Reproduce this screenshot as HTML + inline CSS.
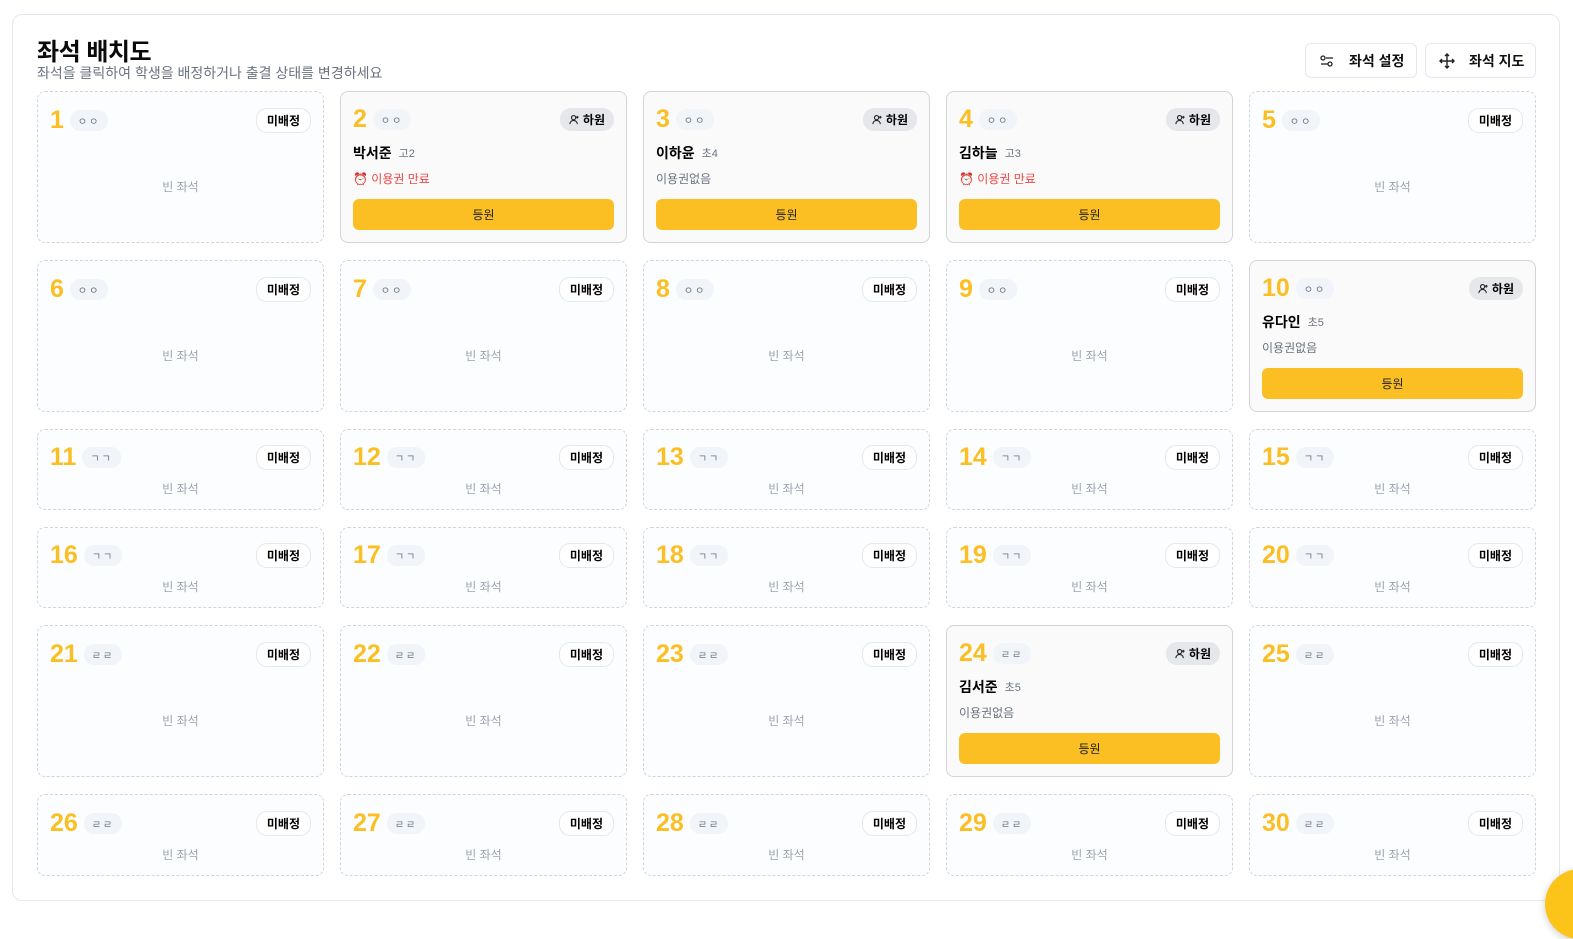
<!DOCTYPE html>
<html><head><meta charset="utf-8"><style>
*{box-sizing:border-box;margin:0;padding:0}
body{width:1573px;height:914px;background:#fff;font-family:"Liberation Sans","Noto Sans CJK KR",sans-serif;position:relative;overflow:hidden}
.outer{position:absolute;left:12px;top:14px;width:1548px;height:887px;border:1px solid #e2e8f0;border-radius:10px;background:#fff}
h1{position:absolute;left:24px;top:17px;font-size:24px;font-weight:700;color:#0a0a0a;letter-spacing:-0.5px}
.sub{position:absolute;left:24px;top:48px;font-size:14px;color:#6b7280}
.btn{position:absolute;top:28px;height:35px;border:1px solid #e2e8f0;border-radius:6px;display:flex;align-items:center;font-size:14px;font-weight:700;color:#111;background:#fff}
.grid{position:absolute;left:24px;top:76px;display:grid;grid-template-columns:repeat(5,287px);column-gap:16px;row-gap:17px;grid-template-rows:152px 152px 81px 81px 152px 82px}
.c{border:1px dashed #d1d5db;border-radius:8px;background:#fcfdfe;padding:12px 12px;display:flex;flex-direction:column}
.c.o{border:1px solid #d4d4d8;background:#fafafa}
.h{height:32px;display:flex;align-items:center}
.n{font-size:25px;font-weight:700;color:#fbbf24;line-height:1}
.z{margin-left:6px;background:#f1f5f9;border-radius:10px;font-size:10px;color:#6b7280;padding:3px 8px;letter-spacing:2px}
.p{margin-left:auto;border:1px solid #e2e8f0;border-radius:11px;font-size:12px;font-weight:700;padding:3px 10px;background:#fff}
.r{margin-left:auto;background:#e5e7eb;border-radius:11px;font-size:12px;font-weight:700;padding:3px 9px;display:flex;align-items:center;gap:3px}
.e{flex:1;display:flex;align-items:center;justify-content:center;font-size:12px;color:#9ca3af;padding-top:6px}
.c.s .e{flex:none;margin-top:6px;height:18px;padding:0}
.nm{margin-top:8px;height:20px;font-size:14px;font-weight:700;display:flex;align-items:center}
.nm span{font-size:11px;color:#6b7280;font-weight:400;margin-left:7px}
.tk{margin-top:7px;height:16px;font-size:12px;display:flex;align-items:center;color:#6b7280}
.tk.x{color:#ef4444}
.go{margin-top:13px;height:32px;background:#fbbf24;border-radius:6px;display:flex;align-items:center;justify-content:center;font-size:12px;color:#222}
.chat{position:absolute;left:1545px;top:869px;width:70px;height:70px;border-radius:50%;background:#fcc419;box-shadow:0 2px 8px rgba(0,0,0,.2)}
</style></head><body>
<div class="outer">
<h1>좌석 배치도</h1>
<div class="sub">좌석을 클릭하여 학생을 배정하거나 출결 상태를 변경하세요</div>
<div class="btn" style="left:1292px;width:112px;padding-left:14px"><svg width="14" height="14" viewBox="0 0 14 14" fill="none" stroke="#222" stroke-width="1.3"><circle cx="3" cy="4" r="2"/><line x1="6" y1="4" x2="13" y2="4"/><circle cx="10" cy="10" r="2"/><line x1="1" y1="10" x2="8" y2="10"/></svg><span style="margin-left:15px">좌석 설정</span></div>
<div class="btn" style="left:1412px;width:111px;padding-left:13px"><svg width="16" height="16" viewBox="0 0 16 16" fill="none" stroke="#222" stroke-width="1.4"><path d="M8 1v14M1 8h14M6 3l2-2 2 2M6 13l2 2 2-2M3 6l-2 2 2 2M13 6l2 2-2 2"/></svg><span style="margin-left:14px">좌석 지도</span></div>
<div class="grid" id="g"></div>
</div>
<div class="chat"></div>
<script>
var occ={2:['박서준','고2',1],3:['이하윤','초4',0],4:['김하늘','고3',1],10:['유다인','초5',0],24:['김서준','초5',0]};
var tall=[1,2,5],h='';
for(var i=1;i<=30;i++){var row=Math.ceil(i/5);var z=row<=2?'ㅇㅇ':row<=4?'ㄱㄱ':'ㄹㄹ';var o=occ[i];var s=tall.indexOf(row)<0;
h+='<div class="c'+(o?' o':'')+(s?' s':'')+'"><div class="h"><span class="n">'+i+'</span><span class="z">'+z+'</span>';
if(o){h+='<span class="r"><svg width="11" height="11" viewBox="0 0 12 12" fill="none" stroke="#222" stroke-width="1.2"><circle cx="5" cy="4" r="2.3"/><path d="M1 11c0-2.5 2-4 4-4s4 1.5 4 4M9 2v3M7.5 3.5h3"/></svg>하원</span></div><div class="nm">'+o[0]+'<span>'+o[1]+'</span></div>'+(o[2]?'<div class="tk x">⏰&nbsp;이용권 만료</div>':'<div class="tk">이용권없음</div>')+'<div class="go">등원</div>';}
else h+='<span class="p">미배정</span></div><div class="e">빈 좌석</div>';
h+='</div>';}
document.getElementById('g').innerHTML=h;
</script>
</body></html>
